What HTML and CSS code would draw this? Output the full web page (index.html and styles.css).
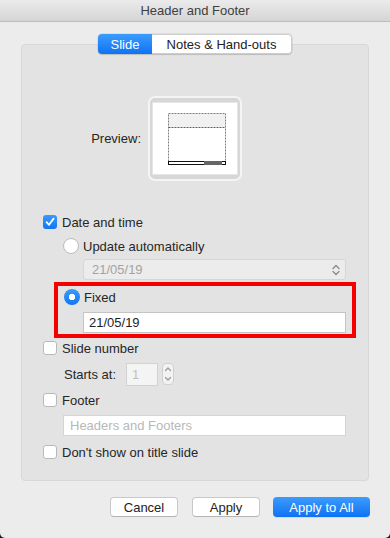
FILE: index.html
```html
<!DOCTYPE html>
<html>
<head>
<meta charset="utf-8">
<link rel="stylesheet" href="styles.css">
</head>
<body>
<div class="window">
  <div class="titlebar">Header and Footer</div>
  <div class="tabs">
    <span class="seg seg-on">Slide</span><span class="seg seg-off">Notes &amp; Hand-outs</span>
  </div>
  <div class="group">
    <div class="preview-row">
      <span class="preview-label">Preview:</span>
      <div class="thumb">
        <div class="thumb-inner">
          <svg width="84" height="70" viewBox="0 0 84 70">
            <rect x="15.5" y="10.5" width="57" height="14" fill="#f1f1f1"/>
            <rect x="15.5" y="10.5" width="57" height="48" fill="none" stroke="#808080" stroke-width="1" stroke-dasharray="2 1"/>
            <line x1="15.5" y1="24.5" x2="72.5" y2="24.5" stroke="#606060" stroke-width="1" stroke-dasharray="2 1"/>
            <rect x="15.5" y="58.5" width="57" height="3" fill="#fff" stroke="#111" stroke-width="1"/>
            <rect x="51" y="58" width="18" height="4" fill="#666"/>
          </svg>
        </div>
      </div>
    </div>

    <div class="row row-date">
      <span class="cb cb-on"><svg width="14" height="14" viewBox="0 0 14 14"><path d="M3.6 7.2 L6 9.8 L10.6 3.6" fill="none" stroke="#fff" stroke-width="1.8" stroke-linecap="round" stroke-linejoin="round"/></svg></span>
      <span class="lbl">Date and time</span>
    </div>
    <div class="row row-radio">
      <span class="rb"></span>
      <span class="lbl">Update automatically</span>
    </div>
    <div class="popup">
      <span>21/05/19</span>
      <svg class="updown" width="8" height="12" viewBox="0 0 8 12"><path d="M1 4.5 L4 1.5 L7 4.5 M1 7.5 L4 10.5 L7 7.5" fill="none" stroke="#8a8a8a" stroke-width="1.3" stroke-linecap="round" stroke-linejoin="round"/></svg>
    </div>
    <div class="highlight">
      <div class="row row-fixed">
        <span class="rb rb-on"></span>
        <span class="lbl">Fixed</span>
      </div>
      <div class="field field-fixed">21/05/19</div>
    </div>
    <div class="row row-slide">
      <span class="cb"></span>
      <span class="lbl">Slide number</span>
    </div>
    <div class="row row-starts">
      <span class="lbl">Starts at:</span>
      <span class="num">1</span>
      <span class="stepper"><svg width="10" height="20" viewBox="0 0 10 20"><path d="M2.5 6.5 L5 4 L7.5 6.5 M2.5 13.5 L5 16 L7.5 13.5" fill="none" stroke="#9a9a9a" stroke-width="1.2" stroke-linecap="round" stroke-linejoin="round"/></svg></span>
    </div>
    <div class="row row-footer">
      <span class="cb"></span>
      <span class="lbl">Footer</span>
    </div>
    <div class="field field-footer">Headers and Footers</div>
    <div class="row row-dont">
      <span class="cb"></span>
      <span class="lbl">Don't show on title slide</span>
    </div>
  </div>
  <div class="buttons">
    <span class="btn btn-cancel">Cancel</span>
    <span class="btn btn-apply">Apply</span>
    <span class="btn btn-all">Apply to All</span>
  </div>
</div>
</body>
</html>
```

FILE: styles.css
```css
html {
  background: #1a1a1a;
}
body {
  margin: 0;
  width: 390px;
  height: 538px;
  font-family: "Liberation Sans", Arial, sans-serif;
  font-size: 13px;
  color: #262626;
}
.window {
  width: 390px;
  height: 538px;
  background: #ececec;
  border-radius: 0 0 5px 5px;
  overflow: hidden;
}
.titlebar {
  height: 21px;
  line-height: 22px;
  text-align: center;
  color: #404040;
  background: linear-gradient(#ebebeb, #d5d5d5);
  border-bottom: 1px solid #bdbdbd;
}
.tabs {
  position: relative;
  z-index: 1;
  display: flex;
  width: 194px;
  height: 20px;
  margin: 12px 0 0 98px;
  border-radius: 4px;
  box-shadow: 0 0 0 0.5px rgba(0,0,0,0.12), 0 1px 1px rgba(0,0,0,0.12);
}
.seg {
  display: flex;
  align-items: center;
  justify-content: center;
  height: 20px;
  box-sizing: border-box;
}
.seg-on {
  width: 54px;
  color: #fff;
  background: linear-gradient(#3c9cfd, #0f73f4);
  border-radius: 4px 0 0 4px;
}
.seg-off {
  width: 140px;
  color: #222;
  background: #fff;
  border: 1px solid #cdcdcd;
  border-left: none;
  border-radius: 0 4px 4px 0;
}
.group {
  margin: -10px 0 0 21px;
  width: 348px;
  height: 437px;
  box-sizing: border-box;
  background: #e3e3e3;
  border: 1px solid #d8d8d8;
  border-radius: 4px;
  display: flex;
  flex-direction: column;
}
.preview-row {
  display: flex;
  align-items: center;
  margin-top: 51px;
  height: 85px;
}
.preview-label {
  width: 119px;
  text-align: right;
  margin-right: 7px;
}
.thumb {
  width: 94px;
  height: 85px;
  box-sizing: border-box;
  border: 2px solid #f4f4f4;
  border-radius: 7px;
  background: #d7d7d7;
  padding: 5px 3px;
}
.thumb-inner {
  width: 84px;
  height: 71px;
  background: #fff;
  box-shadow: 0 0 0 1px #e6e6e6;
}
.thumb-inner svg {
  display: block;
}
.row {
  display: flex;
  align-items: center;
  height: 22px;
}
.row-date {
  margin-top: 30px;
  padding-left: 21px;
}
.row-radio {
  margin-top: 2px;
  padding-left: 41px;
}
.row-slide {
  margin-top: -1px;
  padding-left: 21px;
}
.row-starts {
  margin-top: 3px;
  height: 24px;
  padding-left: 42px;
}
.row-footer {
  margin-top: 3px;
  padding-left: 21px;
}
.row-dont {
  margin-top: 5px;
  padding-left: 21px;
}
.cb {
  width: 14px;
  height: 14px;
  box-sizing: border-box;
  border: 1px solid #b9b9b9;
  border-radius: 3px;
  background: #fff;
  margin-right: 5px;
  flex: none;
}
.cb-on {
  border: none;
  background: linear-gradient(#3a9bfc, #1276f4);
}
.cb-on svg {
  display: block;
}
.rb {
  width: 16px;
  height: 16px;
  box-sizing: border-box;
  border: 1px solid #bcbcbc;
  border-radius: 50%;
  background: #fff;
  margin-right: 4px;
  flex: none;
}
.rb-on {
  border: none;
  background: radial-gradient(circle, #fff 0 3px, transparent 3.5px), linear-gradient(#3a9bfc, #1276f4);
}
.popup {
  margin: 2px 0 0 61px;
  width: 263px;
  height: 21px;
  box-sizing: border-box;
  border: 1px solid #d6d6d6;
  border-radius: 3px;
  background: #ececec;
  color: #a3a3a3;
  display: flex;
  align-items: center;
  justify-content: space-between;
  padding: 0 5px 0 8px;
}
.updown {
  display: block;
}
.highlight {
  margin: 2px 0 0 32px;
  width: 302px;
  height: 56px;
  box-sizing: border-box;
  border: 4px solid #f40000;
  padding-left: 6px;
}
.row-fixed {
  height: 22px;
}
.field {
  height: 21px;
  box-sizing: border-box;
  border: 1px solid #c4c4c4;
  background: #fff;
  display: flex;
  align-items: center;
}
.field-fixed {
  margin: 4px 0 0 19px;
  width: 263px;
  padding-left: 5px;
  color: #1e1e1e;
}
.field-footer {
  margin: 4px 0 0 41px;
  width: 283px;
  padding-left: 6px;
  border-color: #d4d4d4;
  color: #b8b8b8;
}
.num {
  margin-left: 10px;
  width: 32px;
  height: 23px;
  box-sizing: border-box;
  border: 1px solid #d2d2d2;
  background: #f4f4f4;
  color: #c0c0c0;
  display: flex;
  align-items: center;
  padding-left: 5px;
}
.stepper {
  margin-left: 4px;
  width: 12px;
  height: 22px;
  box-sizing: border-box;
  border: 1px solid #d0d0d0;
  border-radius: 4px;
  background: #f2f2f2;
  display: flex;
  align-items: center;
  justify-content: center;
}
.stepper svg {
  display: block;
}
.buttons {
  display: flex;
  justify-content: flex-end;
  margin-top: 16px;
  padding-right: 20px;
}
.btn {
  height: 20px;
  box-sizing: border-box;
  display: flex;
  align-items: center;
  justify-content: center;
  border-radius: 4px;
}
.btn-cancel, .btn-apply {
  width: 68px;
  background: #fff;
  border: 1px solid #c8c8c8;
  border-bottom-color: #b3b3b3;
  color: #222;
}
.btn-cancel {
  margin-right: 14px;
}
.btn-apply {
  margin-right: 13px;
}
.btn-all {
  width: 97px;
  color: #fff;
  background: linear-gradient(#3c9cfd, #0f72f3);
  box-shadow: 0 1px 0 rgba(0,0,0,0.08);
}
```
